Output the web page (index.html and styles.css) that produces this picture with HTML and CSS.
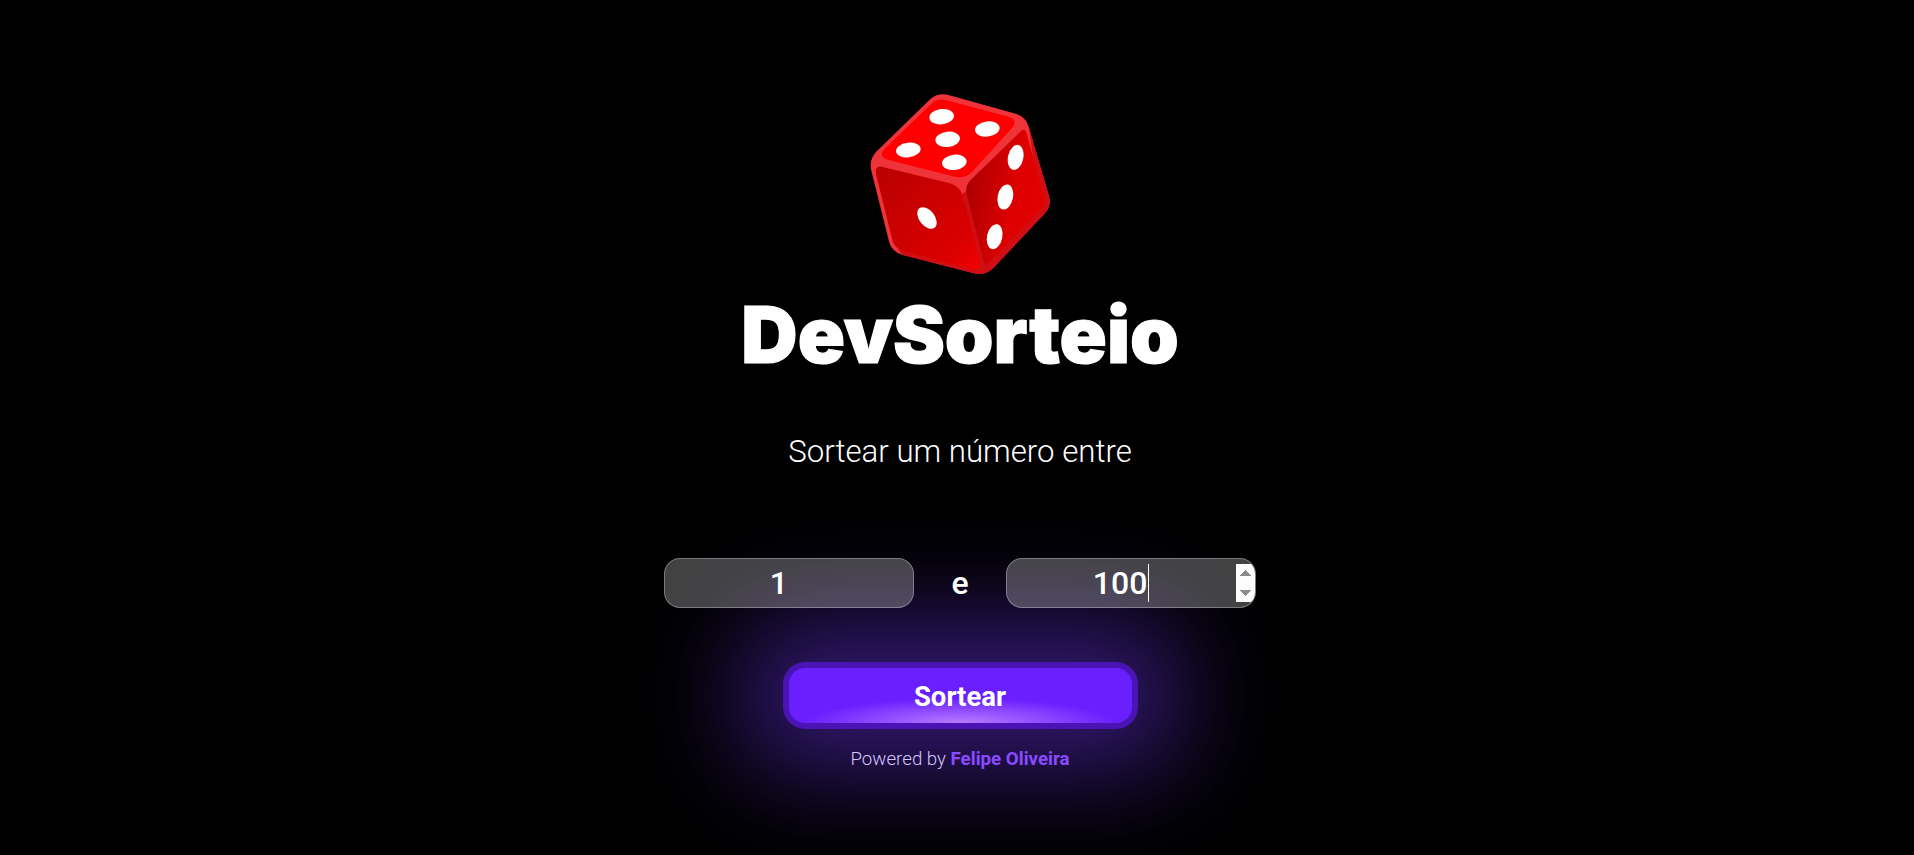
FILE: index.html
```html
<!DOCTYPE html>
<html>
<head>
  <title>DevSorteio</title>
<meta name="viewport" content="width=device-width, initial-scale=1">
<link rel="stylesheet" href="styles.css">
</head>
<body>
<main class="app">
  <svg class="logo" viewBox="0 0 720 630" xmlns="http://www.w3.org/2000/svg" role="img" aria-label="Dado">
    <defs>
      <linearGradient id="faceLeft" x1="0" y1="0" x2="1" y2="1">
        <stop offset="0" stop-color="#b80000"/>
        <stop offset="0.8" stop-color="#dc0000"/>
        <stop offset="1" stop-color="#f40000"/>
      </linearGradient>
      <linearGradient id="faceRight" x1="0" y1="0.3" x2="1" y2="0.6">
        <stop offset="0" stop-color="#a80000"/>
        <stop offset="0.6" stop-color="#dd0000"/>
        <stop offset="1" stop-color="#e40000"/>
      </linearGradient>
    </defs>
    <path fill="#ef3338" d="M272 56 Q298 36 328 46 L530 102 Q558 112 566 140 L628 352 Q634 378 616 398 L462 562 Q438 588 402 580 L186 524 Q158 516 148 488 L94 272 Q86 240 108 216 Z"/>
    <path fill="#cf0d12" d="M368 340 L390 330 L432 545 L602 388 L566 140 L628 352 Q634 378 616 398 L462 562 Q438 588 402 580 L186 524 L170 500 L400 565 Z"/>
    <path fill="#ff0000" d="M276 70 Q292 54 316 60 L506 110 Q536 120 516 144 L398 274 Q376 298 344 290 L146 240 Q112 230 134 206 Z"/>
    <path fill="url(#faceLeft)" d="M126 260 L330 310 Q358 318 368 346 L420 546 Q424 574 396 568 L188 512 Q166 506 158 484 L108 282 Q104 256 126 260 Z"/>
    <path fill="url(#faceRight)" d="M544 152 Q556 144 560 160 L612 350 Q618 372 602 388 L448 546 Q434 562 430 540 L380 342 Q374 318 392 300 Z"/>
    <g fill="#fff">
      <ellipse cx="305" cy="110" rx="37" ry="23" transform="rotate(-7 305 110)"/>
      <ellipse cx="442" cy="147" rx="37" ry="23" transform="rotate(-7 442 147)"/>
      <ellipse cx="323" cy="178" rx="37" ry="23" transform="rotate(-7 323 178)"/>
      <ellipse cx="205" cy="210" rx="37" ry="22" transform="rotate(-7 205 210)"/>
      <ellipse cx="343" cy="247" rx="37" ry="23" transform="rotate(-7 343 247)"/>
      <ellipse cx="527" cy="232" rx="23" ry="38" transform="rotate(12 527 232)"/>
      <ellipse cx="496" cy="351" rx="23" ry="38" transform="rotate(12 496 351)"/>
      <ellipse cx="464" cy="470" rx="23" ry="38" transform="rotate(12 464 470)"/>
      <ellipse cx="261" cy="414" rx="23" ry="37" transform="rotate(-38 261 414)"/>
    </g>
  </svg>
  <h1 class="title">DevSorteio</h1>
  <p class="subtitle">Sortear um número entre</p>
  <form class="range">
    <div class="field">
      <input class="range-input" type="number" value="1">
    </div>
    <span class="range-sep">e</span>
    <div class="field">
      <input class="range-input is-active" type="number" value="100">
      <span class="caret"></span>
    </div>
  </form>
  <button class="draw-btn" type="button">Sortear</button>
  <p class="credit">Powered by <strong>Felipe Oliveira</strong></p>
</main>
</body>
</html>
```

FILE: styles.css
```css
body {
  margin: 0;
  background: #000;
  color: #fff;
  font-family: Roboto, sans-serif;
  overflow: hidden;
}

.app {
  height: 855px;
  box-sizing: border-box;
  padding: 80px 0 0 6px;
  display: flex;
  flex-direction: column;
  align-items: center;
}

.logo {
  width: 240px;
  height: 210px;
  display: block;
}

.title {
  margin: 0;
  font-family: Inter, sans-serif;
  font-weight: 900;
  font-size: 78px;
  line-height: 90px;
  font-optical-sizing: none;
  -webkit-text-stroke: 1.2px #fff;
}

.subtitle {
  margin: 50px 0 0;
  font-weight: 300;
  font-size: 31.2px;
  line-height: 44px;
}

.range {
  margin-top: 84px;
  display: flex;
  align-items: center;
  gap: 37px;
  position: relative;
  z-index: 1;
}

.field {
  position: relative;
  width: 250px;
  height: 50px;
}

.range-input {
  width: 100%;
  height: 100%;
  box-sizing: border-box;
  padding: 0;
  border: 1px solid rgba(255, 255, 255, 0.3);
  border-radius: 16px;
  outline: none;
  overflow: hidden;
  background: rgba(255, 255, 255, 0.26);
  color: #fff;
  font-family: Roboto, sans-serif;
  font-weight: 500;
  font-size: 32px;
  text-align: center;
  text-indent: -2px;
}

.range-input::-webkit-inner-spin-button {
  opacity: 0;
  flex: 0 0 19px;
  min-width: 19px;
  height: 38px;
}

.range-input.is-active::-webkit-inner-spin-button {
  opacity: 1;
}

.caret {
  position: absolute;
  top: 6px;
  left: 142px;
  width: 1px;
  height: 38px;
  background: #fff;
}

.range-sep {
  font-weight: 500;
  font-size: 32px;
}

.draw-btn {
  margin-top: 60px;
  padding-top: 3px;
  width: 343px;
  height: 55px;
  border: none;
  border-radius: 16px;
  color: #fff;
  font-family: Roboto, sans-serif;
  font-weight: 700;
  font-size: 27.5px;
  background:
    radial-gradient(ellipse 45% 45% at 50% 100%, #b87cff 0%, rgba(184, 124, 255, 0) 100%),
    #6a1fff;
  box-shadow: 0 0 0 6px #4a14b4, 0 0 100px 50px rgba(115, 55, 255, 0.44);
}

.credit {
  margin: 23px 0 0;
  font-weight: 300;
  font-size: 18.7px;
  line-height: 26px;
  color: #d6c6ff;
}

.credit strong {
  font-weight: 700;
  color: #8a4bff;
}
```
